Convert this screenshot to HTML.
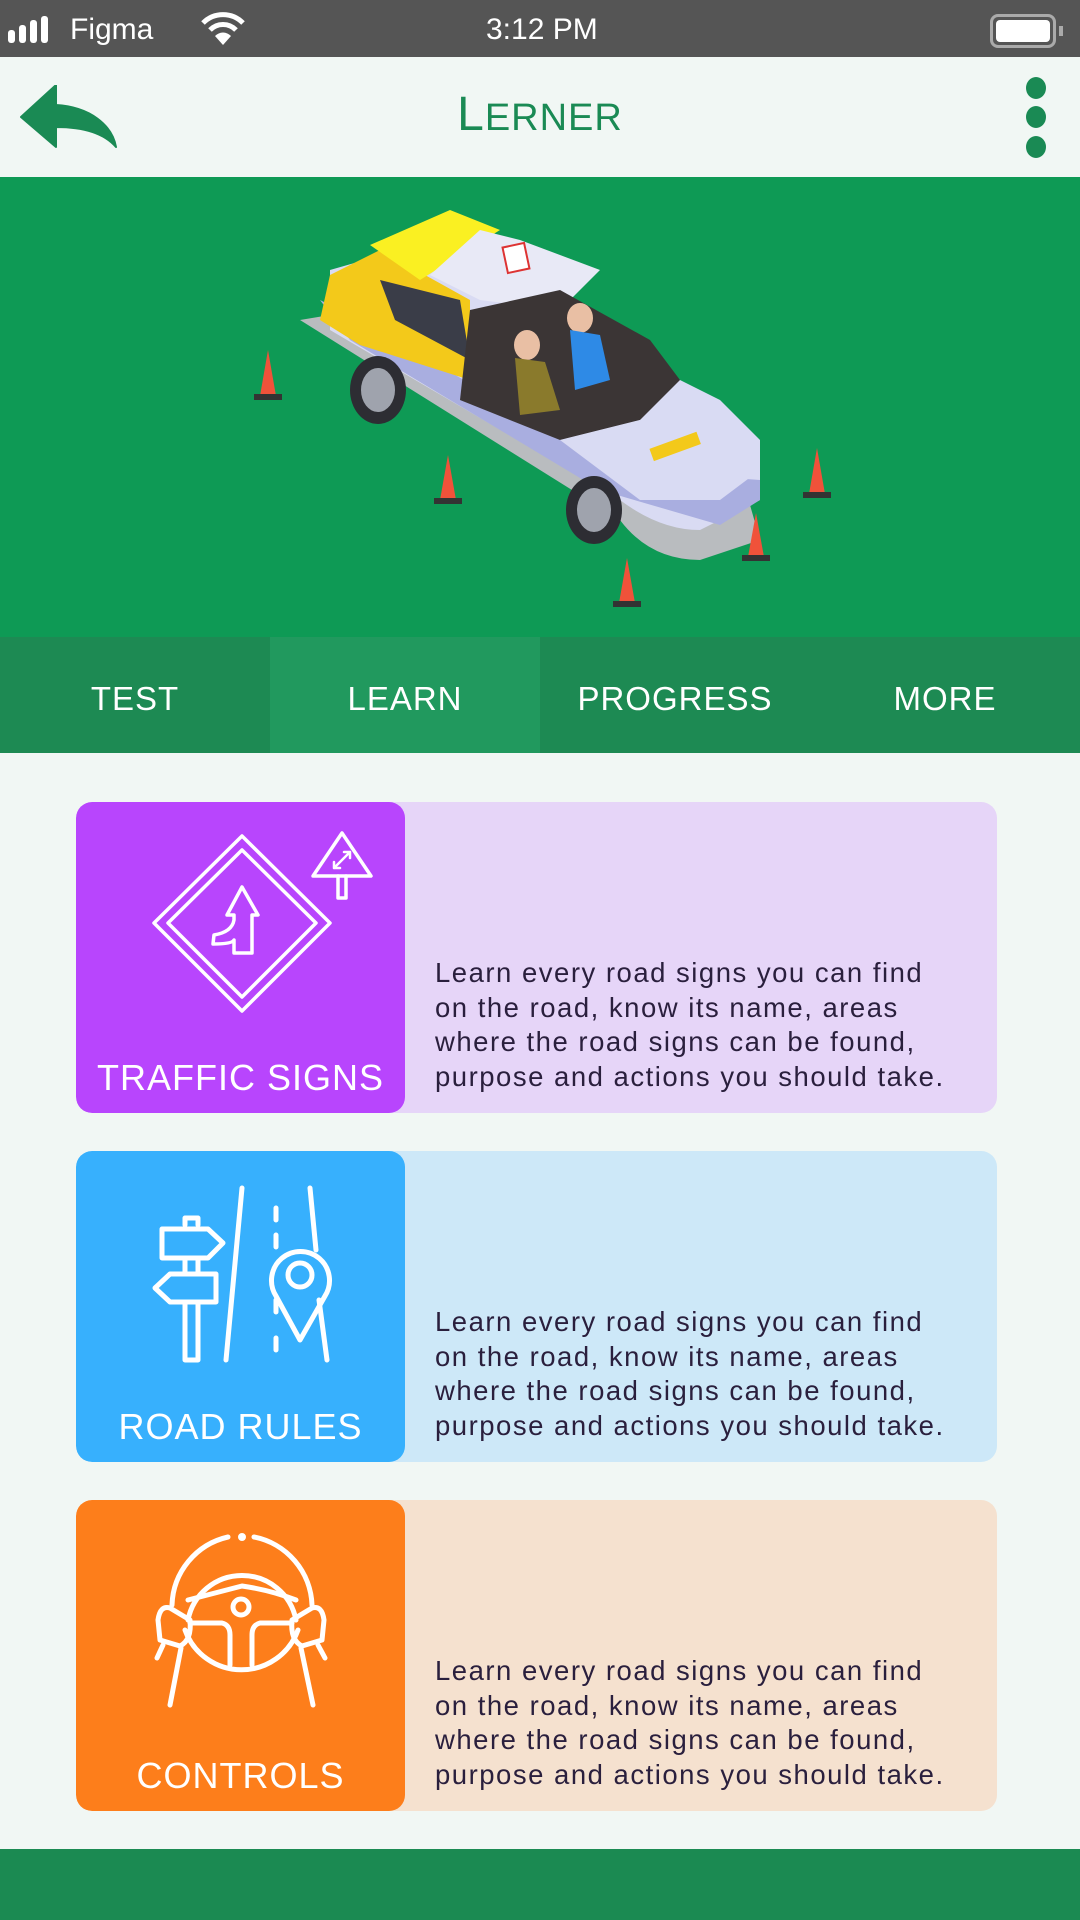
<!DOCTYPE html>
<html><head><meta charset="utf-8"><style>
*{margin:0;padding:0;box-sizing:border-box}
body{width:1080px;height:1920px;background:#f1f7f4;font-family:"Liberation Sans","DejaVu Sans",sans-serif;position:relative;overflow:hidden}
.abs{position:absolute}
.status{left:0;top:0;width:1080px;height:57px;background:#555555;color:#fff;font-size:30px}
.header{left:0;top:57px;width:1080px;height:120px;background:#f1f7f4}
.hero{left:0;top:177px;width:1080px;height:460px;background:#0e9a55}
.tabs{left:0;top:637px;width:1080px;height:116px;background:#1d8a53;display:flex}
.tab{flex:1;color:#fff;font-size:33px;display:flex;align-items:center;justify-content:center;letter-spacing:1px;padding-top:8px}
.card{left:76px;width:921px;height:311px;border-radius:16px;overflow:hidden}
.card .col{position:absolute;left:0;top:0;width:329px;height:311px;border-radius:16px}
.card .lbl{position:absolute;left:0;width:329px;bottom:14px;text-align:center;color:#fff;font-size:36px;letter-spacing:1px}
.card .txt{position:absolute;left:359px;top:154px;font-size:27.5px;line-height:34.5px;color:#2a1f3d;letter-spacing:1.5px}
</style></head><body>
<div class="abs status">
  <svg class="abs" style="left:8px;top:16px" width="52" height="28"><rect x="0" y="14" width="7" height="13" rx="3" fill="#fff"/><rect x="11" y="9" width="7" height="18" rx="3" fill="#fff"/><rect x="22" y="4" width="7" height="23" rx="3" fill="#fff"/><rect x="33" y="0" width="7" height="27" rx="3" fill="#fff"/></svg>
  <div class="abs" style="left:70px;top:13px">Figma</div>
  <svg class="abs" style="left:200px;top:12px" width="46" height="34" viewBox="0 0 46 34"><path d="M3 11 A28 28 0 0 1 43 11" stroke="#fff" stroke-width="5" fill="none"/><path d="M10 18 A18 18 0 0 1 36 18" stroke="#fff" stroke-width="5" fill="none"/><path d="M23 33 L15 24 A11 11 0 0 1 31 24 Z" fill="#fff"/></svg>
  <div class="abs" style="left:486px;top:13px">3:12 PM</div>
  <div class="abs" style="left:990px;top:14px;width:66px;height:34px;border:3px solid #aaa;border-radius:8px;padding:3px"><div style="width:100%;height:100%;background:#fff;border-radius:4px"></div></div>
  <div class="abs" style="left:1059px;top:26px;width:4px;height:10px;background:#aaa"></div>
</div>
<div class="abs header">
  <svg class="abs" style="left:18px;top:28px" width="102" height="64" viewBox="0 0 102 64"><path d="M3 32 L38 0 L38 20 C72 22 94 40 98 62 C86 48 66 42 38 42 L38 62 Z" fill="#1a8a54" stroke="#1a8a54" stroke-width="2" stroke-linejoin="round"/></svg>
  <div class="abs" style="left:0;width:1080px;top:30px;text-align:center;color:#1a8a54;font-size:48px;font-weight:300;letter-spacing:1px">L<span style="font-size:38px">ERNER</span></div>
  <div class="abs" style="left:1026px;top:20px;width:20px;height:22px;border-radius:50%;background:#1a8a54"></div>
  <div class="abs" style="left:1026px;top:49px;width:20px;height:22px;border-radius:50%;background:#1a8a54"></div>
  <div class="abs" style="left:1026px;top:79px;width:20px;height:22px;border-radius:50%;background:#1a8a54"></div>
</div>
<div class="abs hero">
<svg width="1080" height="460" viewBox="0 177 1080 460">
  <path d="M300 320 L620 520 Q650 560 700 560 L760 540 L740 470 L420 300 Z" fill="#b9bcbf"/>
  <path d="M330 270 L330 330 L620 500 Q660 530 700 530 L760 500 L760 440 L720 400 L560 320 L400 250 Z" fill="#d9dbf3"/>
  <path d="M320 300 L350 340 L600 490 L720 525 L760 500 L760 480 L620 470 L360 320 Z" fill="#a9aee0"/>
  <path d="M330 275 L320 320 L360 345 L470 380 L470 300 L380 250 Z" fill="#f3c91a"/>
  <path d="M370 245 L450 210 L500 230 L420 280 Z" fill="#faf022"/>
  <path d="M430 275 L480 230 L520 240 L600 270 L560 310 L480 300 Z" fill="#e8e9f6"/>
  <path d="M380 280 L460 300 L470 360 L395 320 Z" fill="#3a3d48"/>
  <path d="M470 310 L560 290 L650 340 L680 380 L640 420 L560 440 L460 400 Z" fill="#3b3535"/>
  <ellipse cx="580" cy="318" rx="13" ry="15" fill="#e9bfa4"/>
  <path d="M570 330 L600 335 L610 380 L575 390 Z" fill="#2e8ae6"/>
  <ellipse cx="527" cy="345" rx="13" ry="15" fill="#e9bfa4"/>
  <path d="M515 358 L545 362 L560 410 L520 415 Z" fill="#8a7a2c"/>
  <path d="M560 440 L640 420 L690 400 L740 430 L760 470 L720 500 L640 500 Z" fill="#d9dbf3"/>
  <rect x="650" y="440" width="50" height="13" fill="#f3c91a" transform="rotate(-20 675 446)"/>
  <rect x="505" y="245" width="22" height="26" fill="#fff" stroke="#d33" stroke-width="2" transform="rotate(-12 516 258)"/>
  <ellipse cx="378" cy="390" rx="28" ry="34" fill="#2d2d33"/><ellipse cx="378" cy="390" rx="17" ry="22" fill="#9fa3ad"/>
  <ellipse cx="594" cy="510" rx="28" ry="34" fill="#2d2d33"/><ellipse cx="594" cy="510" rx="17" ry="22" fill="#9fa3ad"/>
  <g fill="#f0523a">
    <path d="M268 350 L260 396 L276 396 Z"/><path d="M448 455 L440 500 L456 500 Z"/><path d="M817 448 L809 494 L825 494 Z"/><path d="M756 513 L748 557 L764 557 Z"/><path d="M627 558 L619 603 L635 603 Z"/>
  </g>
  <g fill="#333"><rect x="254" y="394" width="28" height="6"/><rect x="434" y="498" width="28" height="6"/><rect x="803" y="492" width="28" height="6"/><rect x="742" y="555" width="28" height="6"/><rect x="613" y="601" width="28" height="6"/></g>
</svg>
</div>
<div class="abs tabs">
  <div class="tab">TEST</div>
  <div class="tab" style="background:#21995e">LEARN</div>
  <div class="tab">PROGRESS</div>
  <div class="tab">MORE</div>
</div>

<div class="abs card" style="top:802px;background:#e6d5f8">
  <div class="col" style="background:#b845fd"></div>
  <svg class="abs" style="left:0;top:0" width="329" height="311" viewBox="76 802 329 311">
    <g fill="none" stroke="#fff" stroke-width="3.5" stroke-linejoin="round" stroke-linecap="round">
      <path d="M242 836 L330 923 L242 1011 L154 923 Z"/>
      <path d="M242 850 L316 923 L242 997 L168 923 Z"/>
      <path d="M242 887 L258 915 L252 915 L252 953 L234 953 L234 940 Q232 944 213 944 L214 935 Q232 932 234 920 L234 915 L227 915 Z"/>
      <path d="M342 833 L371 876 L313 876 Z"/>
      <path d="M338 876 L338 898 L346 898 L346 876"/>
      <path d="M334 868 L350 852 M334 868 L334 862 M334 868 L340 868 M350 852 L344 852 M350 852 L350 858" stroke-width="2.5"/>
    </g>
  </svg>
  <div class="lbl">TRAFFIC SIGNS</div>
  <div class="txt">Learn every road signs you can find<br>on the road, know its name, areas<br>where the road signs can be found,<br>purpose and actions you should take.</div>
</div>

<div class="abs card" style="top:1151px;background:#cde8f8">
  <div class="col" style="background:#37b0fd"></div>
  <svg class="abs" style="left:0;top:0" width="329" height="311" viewBox="76 1151 329 311">
    <g fill="none" stroke="#fff" stroke-width="5" stroke-linejoin="round" stroke-linecap="round">
      <path d="M185 1225 L185 1218 L198 1218 L198 1225"/>
      <path d="M162 1229 L208 1229 L223 1243 L208 1258 L162 1258 Z"/>
      <path d="M185 1258 L185 1274 M198 1258 L198 1274"/>
      <path d="M216 1274 L170 1274 L155 1288 L170 1302 L216 1302 Z"/>
      <path d="M185 1302 L185 1360 L198 1360 L198 1302"/>
      <path d="M242 1188 L226 1360"/>
      <path d="M276 1208 L276 1220 M276 1235 L276 1247 M276 1300 L276 1312 M276 1338 L276 1350"/>
      <path d="M310 1188 L316 1250 M319 1300 L327 1360"/>
      <path d="M300 1340 L276 1296 A29 29 0 1 1 325 1296 Z"/>
      <circle cx="300" cy="1275" r="12"/>
    </g>
  </svg>
  <div class="lbl">ROAD RULES</div>
  <div class="txt">Learn every road signs you can find<br>on the road, know its name, areas<br>where the road signs can be found,<br>purpose and actions you should take.</div>
</div>

<div class="abs card" style="top:1500px;background:#f5e1cf">
  <div class="col" style="background:#fd7e1b"></div>
  <svg class="abs" style="left:0;top:0" width="329" height="311" viewBox="76 1500 329 311">
    <g fill="none" stroke="#fff" stroke-width="5" stroke-linejoin="round" stroke-linecap="round">
      <path d="M228 1537 A72 72 0 0 0 172 1605 M254 1537 A72 72 0 0 1 312 1605"/>
      <circle cx="242" cy="1537" r="1.5" fill="#fff"/>
      <path d="M188 1620 A55 55 0 0 1 296 1620"/>
      <path d="M188 1600 Q215 1593 242 1586 Q270 1590 296 1600"/>
      <circle cx="241" cy="1607" r="8"/>
      <path d="M190 1623 L222 1623 Q230 1625 230 1635 L230 1665 M292 1623 L260 1623 Q252 1625 252 1635 L252 1665"/>
      <path d="M185 1630 A60 60 0 0 0 298 1630"/>
      <path d="M190 1620 L170 1608 Q160 1605 158 1620 L160 1640 L180 1646 Q192 1640 190 1620 Z"/>
      <path d="M292 1620 L312 1608 Q322 1605 324 1620 L322 1640 L302 1646 Q290 1640 292 1620 Z"/>
      <path d="M163 1645 L157 1658 M181 1648 L170 1705 M318 1645 L325 1658 M301 1648 L313 1705"/>
    </g>
  </svg>
  <div class="lbl">CONTROLS</div>
  <div class="txt">Learn every road signs you can find<br>on the road, know its name, areas<br>where the road signs can be found,<br>purpose and actions you should take.</div>
</div>

<div class="abs" style="left:0;top:1849px;width:1080px;height:71px;background:#1b8a52"></div>
</body></html>
